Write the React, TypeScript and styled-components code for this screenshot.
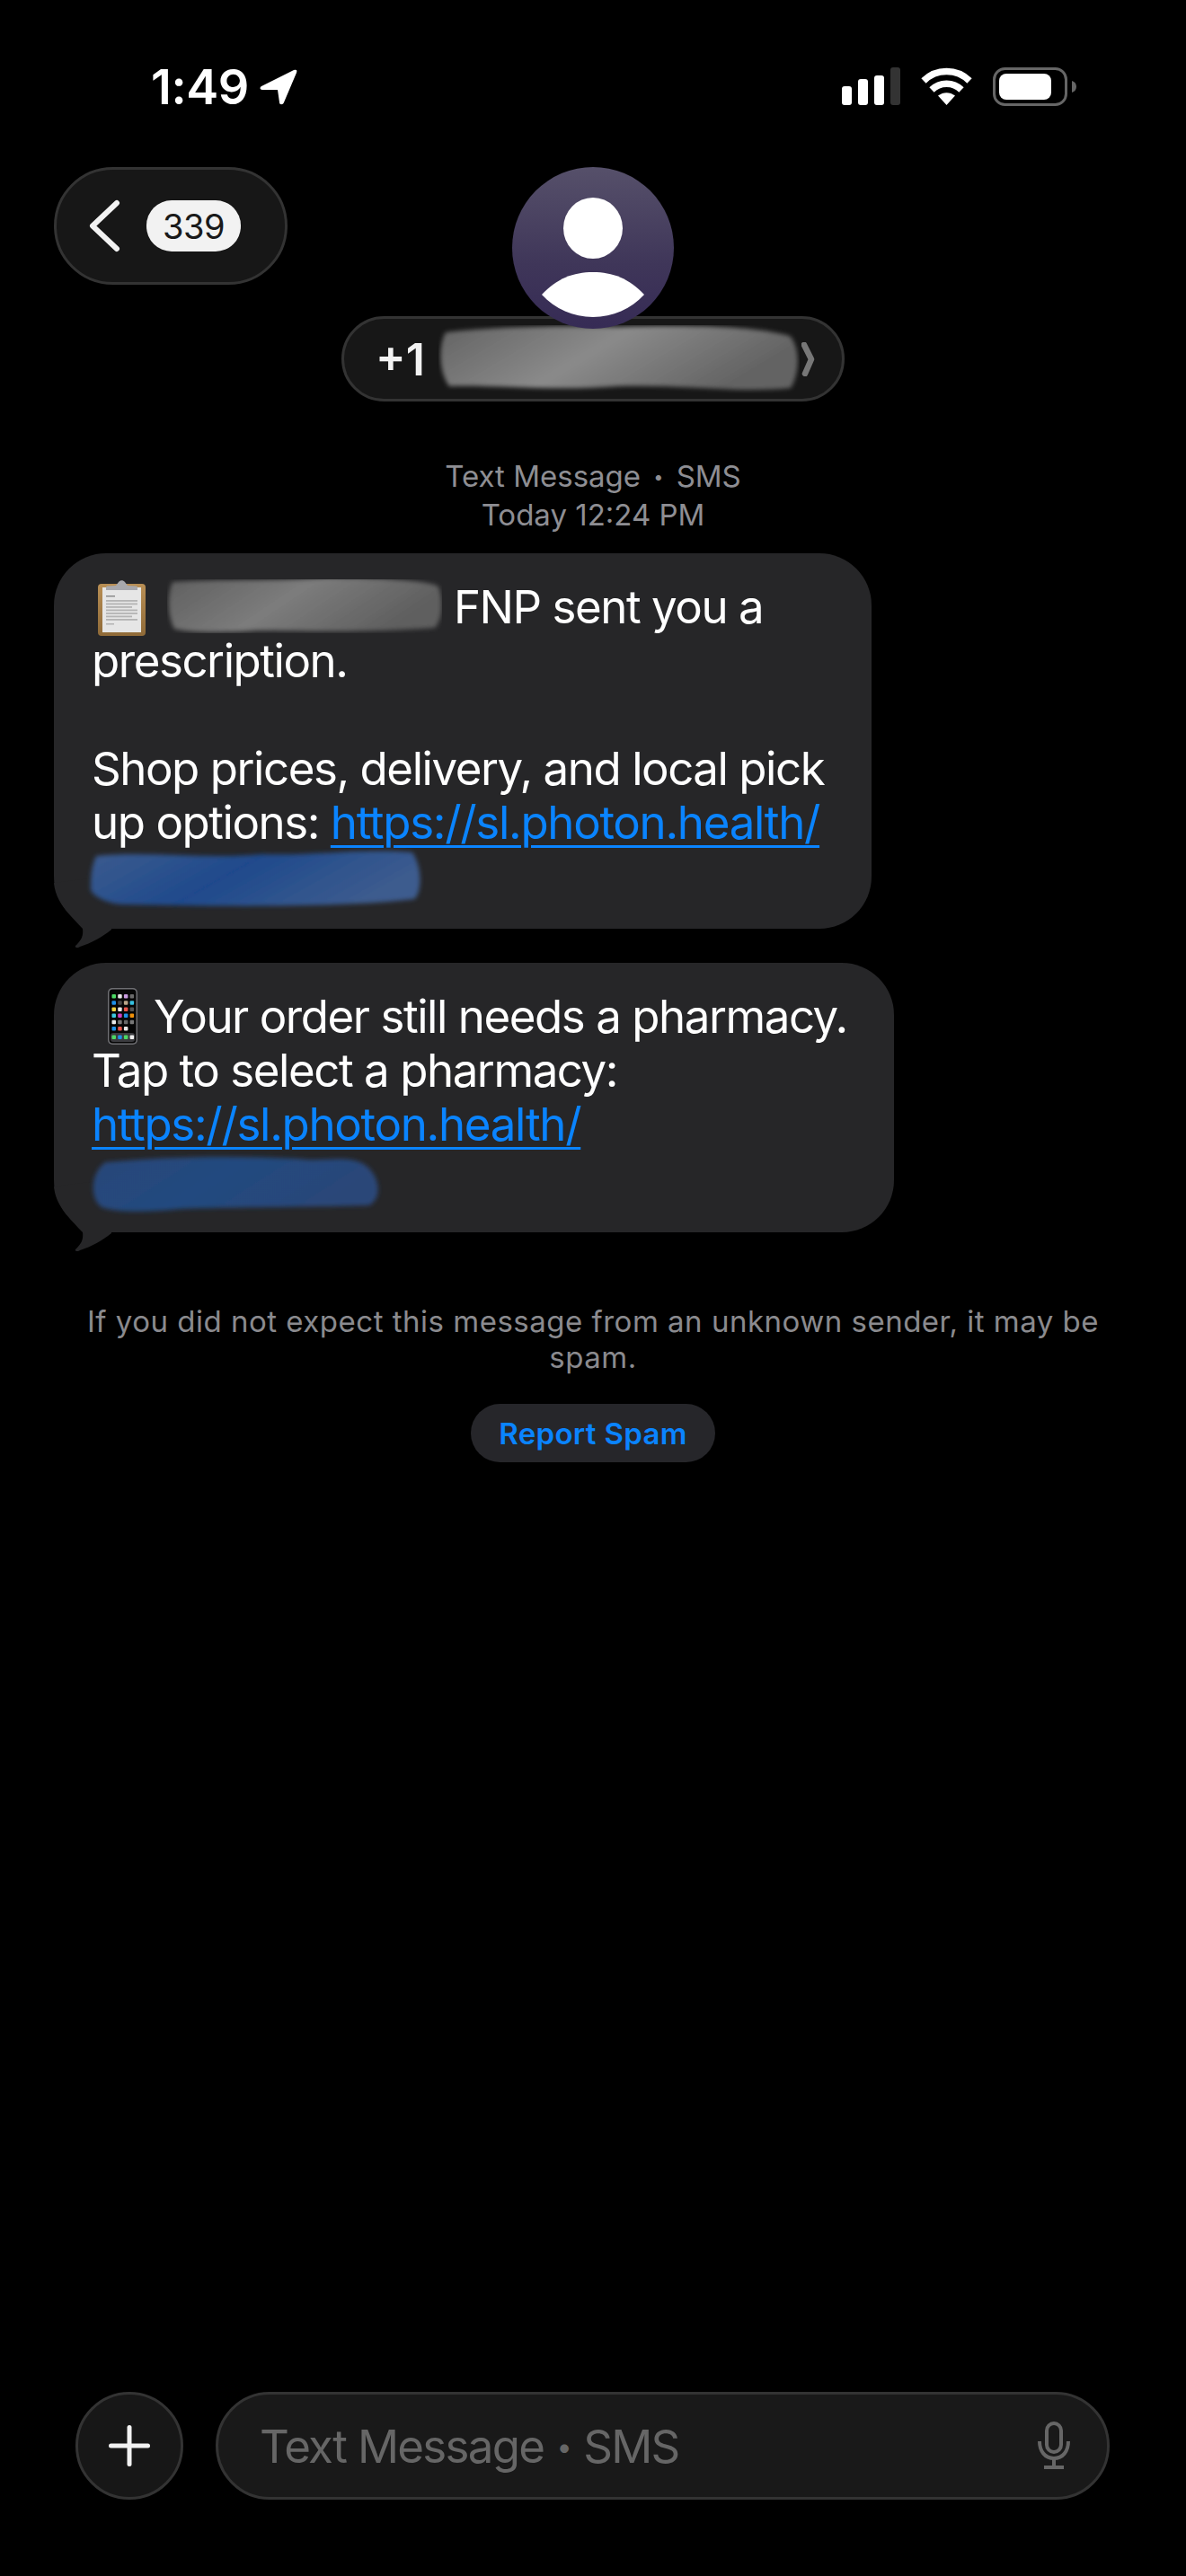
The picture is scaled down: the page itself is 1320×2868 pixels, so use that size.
import { FC } from 'react';
import styled, { createGlobalStyle } from 'styled-components';

const GlobalStyle = createGlobalStyle`
    html, body {
        margin: 0;
        padding: 0;
        background: #000;
    }
    * {
        box-sizing: border-box;
    }
`;

const Page = styled.div`
    width: 1320px;
    height: 2868px;
    background: #000;
    color: #fff;
    font-family: Inter, 'Liberation Sans', sans-serif;
    display: flex;
    flex-direction: column;
`;

const StatusBar = styled.div`
    height: 186px;
    padding: 75px 122px 0 168px;
    display: flex;
    justify-content: space-between;
    align-items: flex-start;
`;

const TimeGroup = styled.div`
    display: flex;
    align-items: center;
    gap: 12px;
`;

const Time = styled.span`
    font-size: 54px;
    line-height: 44px;
    font-weight: 600;
    letter-spacing: -0.4px;
`;

const StatusIcons = styled.div`
    display: flex;
    align-items: flex-start;
    gap: 23px;
`;

const Header = styled.div`
    display: grid;
    grid-template-columns: 1fr auto 1fr;
    padding: 0 60px;
`;

const BackPill = styled.div`
    justify-self: start;
    width: 260px;
    height: 131px;
    border-radius: 66px;
    background: #171717;
    border: 3px solid #333;
    display: flex;
    align-items: center;
    padding-left: 36px;
    gap: 29px;
`;

const CountBadge = styled.span`
    width: 105px;
    height: 57px;
    border-radius: 28px;
    background: #f2f2f2;
    color: #1a1a1a;
    font-size: 38px;
    letter-spacing: -0.5px;
    display: flex;
    align-items: center;
    justify-content: center;
`;

const Contact = styled.div`
    display: flex;
    flex-direction: column;
    align-items: center;
`;

const Avatar = styled.div`
    width: 180px;
    height: 180px;
    border-radius: 50%;
    background: linear-gradient(#56506a, #3f3659 60%, #362b55);
    position: relative;
    z-index: 1;
    overflow: hidden;
`;

const NamePill = styled.div`
    margin-top: -14px;
    width: 560px;
    height: 95px;
    border-radius: 48px;
    background: #171717;
    border: 3px solid #333;
    display: flex;
    align-items: center;
    padding-left: 35px;
    position: relative;
`;

const Phone = styled.span`
    font-size: 50px;
    font-weight: 600;
    color: #f2f2f2;
    margin-right: 15px;
`;

const ChevronRight = styled.svg`
    margin-left: 2px;
`;

const Thread = styled.div`
    padding: 0 60px;
    margin-top: 62px;
    display: flex;
    flex-direction: column;
`;

const Stamp = styled.div`
    text-align: center;
    color: #8e8e93;
    font-size: 33px;
    line-height: 42px;
    font-weight: 400;
    margin-bottom: 22px;
`;

const Dot = styled.span<{ $pad: number }>`
    font-size: 0.6em;
    vertical-align: 0.2em;
    padding: 0 ${(p) => p.$pad}em;
`;

const Bubble = styled.div<{ $gap?: number; $right: number }>`
    position: relative;
    isolation: isolate;
    width: fit-content;
    white-space: nowrap;
    background: #262628;
    border-radius: 58px;
    padding: 30px ${(p) => p.$right}px 30px 42px;
    margin-top: ${(p) => p.$gap ?? 0}px;
    font-size: 51px;
    line-height: 60px;
    letter-spacing: -1.45px;
`;

const Tail = styled.svg`
    position: absolute;
    left: 0;
    bottom: -21px;
    z-index: -1;
`;

const Link = styled.a`
    color: #0a84ff;
    letter-spacing: -1.3px;
    text-decoration: underline;
    text-decoration-thickness: 3px;
    text-underline-offset: 7px;
`;

const InlineArt = styled.svg<{ $left: number; $right: number; $drop: number }>`
    display: inline-block;
    margin: ${(p) => -p.$drop}px ${(p) => p.$right}px ${(p) => -p.$drop}px ${(p) => p.$left}px;
`;

const Notice = styled.div`
    margin-top: 79px;
    padding: 0 36px;
    text-align: center;
    color: #8a8a8e;
    font-size: 33px;
    line-height: 40px;
    letter-spacing: 0.5px;
`;

const SpamButton = styled.div`
    align-self: center;
    margin-top: 32px;
    width: 272px;
    height: 65px;
    border-radius: 33px;
    background: #26262a;
    color: #0a84ff;
    font-size: 33px;
    font-weight: 600;
    letter-spacing: 0.3px;
    display: flex;
    align-items: center;
    justify-content: center;
`;

const Composer = styled.div`
    margin-top: auto;
    margin-bottom: 85px;
    padding: 0 85px 0 84px;
    display: flex;
    gap: 36px;
    align-items: center;
`;

const PlusButton = styled.div`
    width: 120px;
    height: 120px;
    flex: none;
    border-radius: 50%;
    background: #171717;
    border: 3px solid #333;
    display: flex;
    align-items: center;
    justify-content: center;
`;

const InputPill = styled.div`
    flex: 1;
    height: 120px;
    border-radius: 60px;
    background: #191919;
    border: 3px solid #333;
    padding: 0 40px 0 46px;
    display: flex;
    align-items: center;
    justify-content: space-between;
`;

const Placeholder = styled.span`
    color: #666;
    font-size: 51px;
    letter-spacing: -1.7px;
`;

const InlineBlob = styled.span`
    display: inline-block;
    height: 60px;
    margin: -11px 0 -11px;
    svg {
        display: block;
    }
`;

const BlockBlob = styled.div<{ $left: number; $top: number; $h: number }>`
    margin-left: ${(p) => p.$left}px;
    margin-top: ${(p) => p.$top}px;
    height: ${(p) => p.$h}px;
    svg {
        display: block;
        overflow: visible;
    }
`;

const SignalIcon = () => (
    <svg width="65" height="42" viewBox="0 0 65 42">
        <rect x="0" y="21" width="11" height="21" rx="3" fill="#fff" />
        <rect x="18" y="13" width="11" height="29" rx="3" fill="#fff" />
        <rect x="36" y="9" width="11" height="33" rx="3" fill="#fff" />
        <rect x="54" y="0" width="11" height="42" rx="3" fill="#333" />
    </svg>
);

const WifiIcon = () => (
    <svg width="57" height="42" viewBox="0 0 57 42" fill="none" stroke="#fff" strokeWidth="7.5">
        <path d="M3 15 C17 1 40 1 54 15" />
        <path d="M12 25 C21 16 36 16 45 25" />
        <path d="M28.5 42 L19 31.5 C25 27 32 27 38 31.5 Z" fill="#fff" stroke="none" />
    </svg>
);

const BatteryIcon = () => (
    <svg width="93" height="43" viewBox="0 0 93 43">
        <rect x="1.5" y="1.5" width="80" height="40" rx="12" fill="none" stroke="#666" strokeWidth="3" />
        <rect x="7" y="7" width="58" height="29" rx="8" fill="#fff" />
        <path d="M88 15 C91 16 93 18 93 21.5 C93 25 91 27 88 28 Z" fill="#666" />
    </svg>
);

const ClipboardEmoji = () => (
    <InlineArt $left={7} $right={24} $drop={14} width="53" height="62" viewBox="0 0 53 62">
        <defs>
            <linearGradient id="board" x1="0" y1="0" x2="0" y2="1">
                <stop offset="0" stopColor="#b98f55" />
                <stop offset="1" stopColor="#8f6a38" />
            </linearGradient>
        </defs>
        <rect x="0" y="4" width="53" height="58" rx="4" fill="url(#board)" />
        <rect x="5" y="8" width="43" height="50" fill="#e6e6e6" />
        <rect x="9" y="17" width="10" height="1.500" fill="#8a8a8a" />
        {[22, 25.5, 29, 32.5, 36, 39.5, 43].map((y, i) => (
            <rect key={y} x="9" y={y} width={i % 3 === 2 ? 29 : 35} height="1.800" fill="#b4b4b4" />
        ))}
        <rect x="9" y="48" width="9" height="1.500" fill="#b4b4b4" />
        <path
            d="M9 11 L9 8 C9 7 10 6.500 11 6.500 L20 6 L23 2 C25 -0.500 28 -0.500 30 2 L33 6 L42 6.500 C43 6.500 44 7 44 8 L44 11 Z"
            fill="#a8a8ac"
        />
    </InlineArt>
);

const phoneApps = [
    '#4cd964', '#e8e8e8', '#c99be0', '#6a6a6a',
    '#1e90e8', '#444', '#b8a488', '#35c0e0',
    '#f0d040', '#e8e8e8', '#e8564a', '#555',
    '#3cc8e0', '#d040c0', '#1e90e8', '#f0900a',
    '#e8e8e8', '#777', '#666', '#777',
    '#1e90e8', '#e8564a', '#e8e8e8',
];

const PhoneEmoji = () => (
    <InlineArt $left={18} $right={18} $drop={13} width="33" height="63" viewBox="0 0 33 63">
        <rect x="0" y="0" width="33" height="63" rx="5" fill="#6e6e72" />
        <rect x="1.500" y="1.500" width="30" height="60" rx="4" fill="#060606" />
        {phoneApps.map((c, i) => (
            <rect key={i} x={4.500 + (i % 4) * 6.700} y={7 + Math.floor(i / 4) * 7.200} width="4.500" height="4.500" rx="1" fill={c} />
        ))}
        <rect x="3" y="50" width="27" height="10" rx="3" fill="#3a3a3e" />
        {['#4cd964', '#1e90e8', '#4cd964', '#eeeeee'].map((c, i) => (
            <rect key={c + i} x={4.500 + i * 6.700} y="52.500" width="4.500" height="4.500" rx="1" fill={c} />
        ))}
    </InlineArt>
);

const SoftBlob: FC<{ id: string; width: number; height: number; d: string; from: string; to: string }> = ({
    id,
    width,
    height,
    d,
    from,
    to,
}) => (
    <svg width={width} height={height} viewBox={`0 0 ${width} ${height}`}>
        <defs>
            <linearGradient id={`${id}-fill`} x1="0" y1="0" x2="1" y2="0.3">
                <stop offset="0" stopColor={from} />
                <stop offset="0.5" stopColor={to} />
                <stop offset="1" stopColor={from} />
            </linearGradient>
            <filter id={`${id}-soft`} x="-5%" y="-15%" width="110%" height="130%">
                <feGaussianBlur stdDeviation="2.5" />
            </filter>
        </defs>
        <path d={d} fill={`url(#${id}-fill)`} filter={`url(#${id}-soft)`} />
    </svg>
);

const TailShape = () => (
    <Tail width="80" height="80" viewBox="0 0 80 80">
        <path
            d="M0 8 C2 30 18 44 32 59 C33 68 30 72 24 78 C23 80 26 81 29 79 C42 75 54 68 64 60 L64 0 Z"
            fill="#262628"
        />
    </Tail>
);

const App: FC = () => (
    <Page>
        <GlobalStyle />
        <StatusBar>
            <TimeGroup>
                <Time>1:49</Time>
                <svg width="42" height="40" viewBox="0 0 42 40">
                    <path
                        d="M2 19 L38 1 C41 0 42 1 41 4 L27 37 C26 40 22 40 22 37 L20 23 L3 23 C0 23 0 20 2 19 Z"
                        fill="#fff"
                    />
                </svg>
            </TimeGroup>
            <StatusIcons>
                <SignalIcon />
                <WifiIcon />
                <BatteryIcon />
            </StatusIcons>
        </StatusBar>
        <Header>
            <BackPill>
                <svg width="35" height="59" viewBox="0 0 35 59" fill="none">
                    <path d="M31 4 L4 29.500 L31 55" stroke="#f2f2f2" strokeWidth="6" strokeLinecap="round" strokeLinejoin="round" />
                </svg>
                <CountBadge>339</CountBadge>
            </BackPill>
            <Contact>
                <Avatar>
                    <svg width="180" height="180" viewBox="0 0 180 180">
                        <ellipse cx="90" cy="68" rx="33" ry="34" fill="#fff" />
                        <path d="M33 142 C50 124 68 117 90 117 C112 117 130 124 147 142 C132 158 112 167 90 167 C68 167 48 158 33 142 Z" fill="#fff" />
                    </svg>
                </Avatar>
                <NamePill>
                    <Phone>+1</Phone>
                    <SoftBlob
                        id="name"
                        width={402}
                        height={76}
                        from="#636363"
                        to="#8a8a8a"
                        d="M8 8 C60 2 130 0 200 2 C270 0 350 0 391 12 C403 25 402 54 392 70 C330 76 280 66 200 68 C130 74 60 66 12 68 C0 52 0 22 8 8 Z"
                    />
                    <ChevronRight width="15" height="38" viewBox="0 0 15 38" fill="none">
                        <path d="M3 3 L11 19 L4 35" stroke="#777" strokeWidth="6.500" strokeLinecap="round" strokeLinejoin="round" />
                    </ChevronRight>
                </NamePill>
            </Contact>
            <div />
        </Header>
        <Thread>
            <Stamp>
                Text Message <Dot $pad={0.25}>•</Dot> SMS
                <br />
                Today 12:24 PM
            </Stamp>
            <Bubble $right={53}>
                <ClipboardEmoji />
                <InlineBlob>
                    <SoftBlob
                        id="doctor"
                        width={306}
                        height={60}
                        from="#5f5f5f"
                        to="#7c7c7c"
                        d="M6 3 C60 -1 110 3 180 -2 C230 -2 292 1 302 8 C308 24 306 46 298 54 C220 60 150 57 100 57 C60 60 20 59 8 55 C0 40 0 16 6 3 Z"
                    />
                </InlineBlob>
                {' FNP sent you a'}
                <br />
                prescription.
                <br />
                <br />
                Shop prices, delivery, and local pick
                <br />
                up options: <Link>https://sl.photon.health/</Link>
                <BlockBlob $left={-1} $top={1} $h={57}>
                    <SoftBlob
                        id="linkOne"
                        width={368}
                        height={60}
                        from="#3c5b8e"
                        to="#1f4a8c"
                        d="M6 6 C60 0 130 10 190 4 C250 6 300 -3 358 2 C370 20 368 48 360 54 C280 64 130 62 40 60 C20 60 4 52 0 44 C0 30 0 20 6 6 Z"
                    />
                </BlockBlob>
                <TailShape />
            </Bubble>
            <Bubble $gap={38} $right={52}>
                <PhoneEmoji />
                Your order still needs a pharmacy.
                <br />
                Tap to select a pharmacy:
                <br />
                <Link>https://sl.photon.health/</Link>
                <BlockBlob $left={-1} $top={6} $h={54}>
                    <SoftBlob
                        id="linkTwo"
                        width={323}
                        height={62}
                        from="#2a4778"
                        to="#22487f"
                        d="M16 6 C80 0 150 -2 230 2 C260 6 280 -2 300 6 C322 16 326 46 310 54 C250 56 150 56 100 58 C60 62 30 62 12 56 C0 48 -2 20 16 6 Z"
                    />
                </BlockBlob>
                <TailShape />
            </Bubble>
            <Notice>If you did not expect this message from an unknown sender, it may be spam.</Notice>
            <SpamButton>Report Spam</SpamButton>
        </Thread>
        <Composer>
            <PlusButton>
                <svg width="46" height="46" viewBox="0 0 46 46">
                    <rect x="20.500" y="0" width="5" height="46" rx="2.500" fill="#f2f2f2" />
                    <rect x="0" y="20.500" width="46" height="5" rx="2.500" fill="#f2f2f2" />
                </svg>
            </PlusButton>
            <InputPill>
                <Placeholder>
                    Text Message <Dot $pad={0.05}>•</Dot> SMS
                </Placeholder>
                <svg width="38" height="54" viewBox="0 0 38 54" fill="none" stroke="#666" strokeWidth="4">
                    <rect x="11" y="2" width="16" height="32" rx="8" />
                    <path d="M3 22 C3 33 9 41 19 41 C29 41 35 33 35 22" />
                    <path d="M19 41 L19 51 M8 51 L30 51" />
                </svg>
            </InputPill>
        </Composer>
    </Page>
);

export default App;
